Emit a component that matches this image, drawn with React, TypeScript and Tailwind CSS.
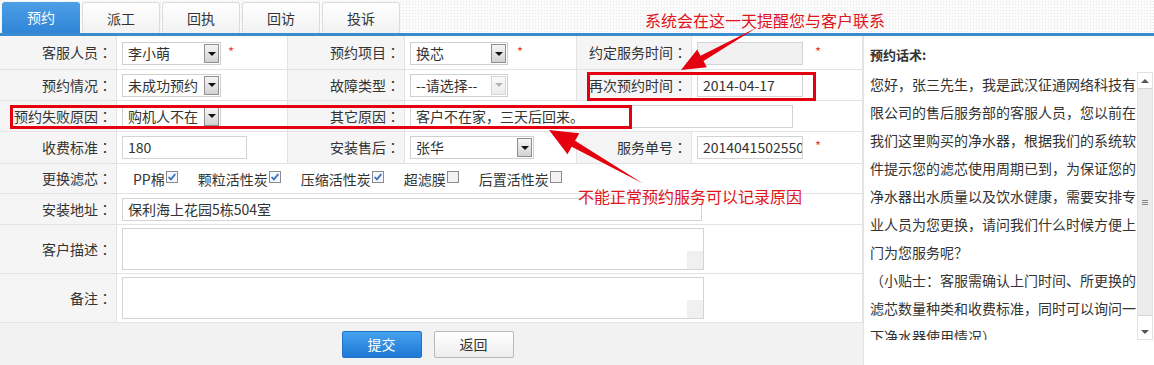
import React from "react";

const cjk = "font-['Noto_Sans_CJK_SC',sans-serif]";

const tabs = ["预约", "派工", "回执", "回访", "投诉"];

const scriptLines = [
  "您好，张三先生，我是武汉征通网络科技有",
  "限公司的售后服务部的客服人员，您以前在",
  "我们这里购买的净水器，根据我们的系统软",
  "件提示您的滤芯使用周期已到，为保证您的",
  "净水器出水质量以及饮水健康，需要安排专",
  "业人员为您更换，请问我们什么时候方便上",
  "门为您服务呢？",
  "（小贴士：客服需确认上门时间、所更换的",
  "滤芯数量种类和收费标准，同时可以询问一",
  "下净水器使用情况）",
];

const filters = [
  { name: "PP棉", checked: true },
  { name: "颗粒活性炭", checked: true },
  { name: "压缩活性炭", checked: true },
  { name: "超滤膜", checked: false },
  { name: "后置活性炭", checked: false },
];

function Label({ text }: { text: string }) {
  return (
    <div className="bg-[#f5f5f5] border-r border-[#e3e3e3] flex items-center justify-end pr-[4px] text-[14px] text-[#333] whitespace-nowrap">
      {text}
      <span className="font-['Noto_Sans_CJK_TC',sans-serif]">：</span>
    </div>
  );
}

function Star({ className = "" }: { className?: string }) {
  return <span className={`text-[#e8443a] text-[13px] leading-none -mt-[5px] ${className}`}>*</span>;
}

function Select({ value, w, disabled = false }: { value: string; w: string; disabled?: boolean }) {
  return (
    <div className={`${w} h-[23px] border border-[#d0d0d0] bg-white flex items-stretch`}>
      <div className="flex-1 pl-[5px] text-[14px] leading-[21px] text-[#333] whitespace-nowrap overflow-hidden">{value}</div>
      <div
        className={`w-[15px] my-[1px] mr-[1px] border flex items-center justify-center ${
          disabled
            ? "border-[#d6d6d6] bg-linear-to-b from-[#fafafa] to-[#ececec]"
            : "border-[#8e8e8e] bg-linear-to-b from-[#f6f6f6] to-[#d2d2d2]"
        }`}
      >
        <div
          className={`w-0 h-0 border-l-[4px] border-r-[4px] border-t-[4px] border-l-transparent border-r-transparent ${
            disabled ? "border-t-[#b5b5b5]" : "border-t-[#111]"
          }`}
        />
      </div>
    </div>
  );
}

function Input({ value = "", w, disabled = false }: { value?: string; w: string; disabled?: boolean }) {
  return (
    <div
      className={`${w} h-[23px] border border-[#d3d3d3] pl-[5px] text-[14px] leading-[21px] text-[#333] whitespace-nowrap overflow-hidden ${
        disabled ? "bg-[#f1f1f1]" : "bg-white"
      }`}
    >
      {value}
    </div>
  );
}

function Checkbox({ checked }: { checked: boolean }) {
  return (
    <svg width="12" height="12" viewBox="0 0 12 12" className="-mt-[3px]">
      <rect x="0.5" y="0.5" width="11" height="11" fill={checked ? "#f4f7fb" : "#f2f2f2"} stroke="#8c8c8c" />
      {checked && <path d="M2.6 6 L4.9 8.4 L9.3 3.1" fill="none" stroke="#3a6fc2" strokeWidth="1.7" />}
    </svg>
  );
}

function TextArea() {
  return (
    <div className="w-[582px] h-[42px] border border-[#d3d3d3] bg-white relative">
      <div className="absolute right-0 bottom-0 w-[16px] h-[18px] bg-[#f0f0f0]" />
    </div>
  );
}

const row = "grid grid-cols-[117px_171px_117px_172px_115px_171px] border-b border-[#e3e3e3]";
const val = "border-r border-[#e3e3e3] flex items-center pl-[5px]";

export default function App() {
  return (
    <div className={`w-[1154px] h-[365px] relative overflow-hidden bg-white ${cjk}`}>
      {/* Tabs */}
      <div className="h-[33px] flex items-end gap-[2px] pl-[2px] bg-[#fbfbfb] bg-[radial-gradient(#e6e6e6_1px,transparent_1px)] bg-[length:3px_3px]">
        {tabs.map((t, i) => (
          <div
            key={t}
            className={`w-[78px] h-[31px] rounded-t-[3px] flex items-center justify-center text-[14px] ${
              i === 0
                ? "bg-linear-to-b from-[#4d9fe6] to-[#2f85d6] text-white"
                : "bg-linear-to-b from-white to-[#f2f2f2] border border-b-0 border-[#dcdcdc] text-[#333]"
            }`}
          >
            {t}
          </div>
        ))}
      </div>
      <div className="h-[3px] bg-[#3b8bd0]" />

      <div className="flex">
        {/* Form */}
        <div className="w-[863px] shrink-0">
          <div className={`${row} h-[34px]`}>
            <Label text="客服人员" />
            <div className={`${val} gap-[7px] pt-[2px]`}>
              <Select value="李小萌" w="w-[99px]" />
              <Star />
            </div>
            <Label text="预约项目" />
            <div className={`${val} gap-[9px] pt-[2px]`}>
              <Select value="换芯" w="w-[98px]" />
              <Star />
            </div>
            <Label text="约定服务时间" />
            <div className={`${val} gap-[12px] pt-[2px]`}>
              <Input w="w-[106px]" disabled />
              <Star />
            </div>
          </div>

          <div className={`${row} h-[31px]`}>
            <Label text="预约情况" />
            <div className={val}>
              <Select value="未成功预约" w="w-[99px]" />
            </div>
            <Label text="故障类型" />
            <div className={val}>
              <Select value="--请选择--" w="w-[98px]" disabled />
            </div>
            <Label text="再次预约时间" />
            <div className={val}>
              <Input value="2014-04-17" w="w-[106px]" />
            </div>
          </div>

          <div className={`${row} h-[31px]`}>
            <Label text="预约失败原因" />
            <div className={val}>
              <Select value="购机人不在" w="w-[99px]" />
            </div>
            <Label text="其它原因" />
            <div className={`${val} col-span-3`}>
              <Input value="客户不在家，三天后回来。" w="w-[383px]" />
            </div>
          </div>

          <div className={`${row} h-[32px]`}>
            <Label text="收费标准" />
            <div className={val}>
              <Input value="180" w="w-[125px]" />
            </div>
            <Label text="安装售后" />
            <div className={val}>
              <Select value="张华" w="w-[124px]" />
            </div>
            <Label text="服务单号" />
            <div className={`${val} gap-[12px]`}>
              <Input value="2014041502550" w="w-[106px]" />
              <Star />
            </div>
          </div>

          <div className={`${row} h-[30px]`}>
            <Label text="更换滤芯" />
            <div className={`${val} col-span-5 pl-[16px] gap-[20px]`}>
              {filters.map((f) => (
                <div key={f.name} className="flex items-center gap-[1px] text-[14px] text-[#333]">
                  <span className="leading-[20px]">{f.name}</span>
                  <Checkbox checked={f.checked} />
                </div>
              ))}
            </div>
          </div>

          <div className={`${row} h-[31px]`}>
            <Label text="安装地址" />
            <div className={`${val} col-span-5`}>
              <Input value="保利海上花园5栋504室" w="w-[580px]" />
            </div>
          </div>

          <div className={`${row} h-[49px]`}>
            <Label text="客户描述" />
            <div className={`${val} col-span-5`}>
              <TextArea />
            </div>
          </div>

          <div className={`${row} h-[49px]`}>
            <Label text="备注" />
            <div className={`${val} col-span-5`}>
              <TextArea />
            </div>
          </div>

          <div className="h-[42px] bg-[#f2f2f2] flex items-center justify-center gap-[12px] pr-[8px]">
            <button className="w-[80px] h-[27px] rounded-[2px] border border-[#1f72c6] bg-linear-to-b from-[#45a2ee] to-[#1e78d6] text-white text-[14px]">
              提交
            </button>
            <button className="w-[80px] h-[27px] rounded-[2px] border border-[#b9b9b9] bg-linear-to-b from-white to-[#ededed] text-[#333] text-[14px]">
              返回
            </button>
          </div>
        </div>

        {/* Script panel */}
        <div className="flex-1 border-l border-[#e3e3e3] pl-[6px]">
          <div className="mt-[9px] h-[20px] leading-[20px] text-[13px] font-bold text-[#333]">预约话术:</div>
          <div className="mt-[5px] h-[270px] flex">
            <div className="w-[267px] overflow-hidden text-[14px] leading-[28px] text-[#333]">
              {scriptLines.map((l, i) => (
                <div key={i} className="whitespace-nowrap">
                  {l}
                </div>
              ))}
            </div>
            <div className="w-[16px] mt-[2px] flex flex-col border border-[#e2e2e2] bg-white">
              <div className="h-[15px] flex items-center justify-center">
                <div className="w-0 h-0 border-l-[4px] border-r-[4px] border-b-[4px] border-l-transparent border-r-transparent border-b-[#555]" />
              </div>
              <div className="h-[228px] bg-[#ececec] border-y border-[#d4d4d4] flex items-center justify-center">
                <div className="w-[6px] flex flex-col gap-[1px]">
                  <div className="h-px bg-[#888]" />
                  <div className="h-px bg-[#888]" />
                  <div className="h-px bg-[#888]" />
                </div>
              </div>
              <div className="flex-1" />
              <div className="h-[15px] flex items-center justify-center">
                <div className="w-0 h-0 border-l-[4px] border-r-[4px] border-t-[4px] border-l-transparent border-r-transparent border-t-[#555]" />
              </div>
            </div>
          </div>
        </div>
      </div>

      {/* Annotations */}
      <div className="absolute left-[10px] top-[105px] w-[622px] h-[24px] border-[3px] border-[#e5000f] pointer-events-none" />
      <div className="absolute left-[587px] top-[72px] w-[229px] h-[29px] border-[3px] border-[#e5000f] pointer-events-none" />
      <div className="absolute left-[645px] top-[10px] text-[16px] leading-[20px] text-[#e2141b] whitespace-nowrap">
        系统会在这一天提醒您与客户联系
      </div>
      <div className="absolute left-[578px] top-[186px] text-[16px] leading-[20px] text-[#e2141b] whitespace-nowrap">
        不能正常预约服务可以记录原因
      </div>
      <svg className="absolute left-0 top-0 pointer-events-none" width="1154" height="365">
        <polygon
          points="757,27.5 703.5,61 706.8,67.2 681,70 697.2,49.6 700.5,55.8"
          fill="#e5000f"
        />
        <polygon
          points="643,183.5 575.1,140.7 579.3,133.3 549,130 567.5,154.2 571.7,146.8"
          fill="#e5000f"
        />
      </svg>
    </div>
  );
}
